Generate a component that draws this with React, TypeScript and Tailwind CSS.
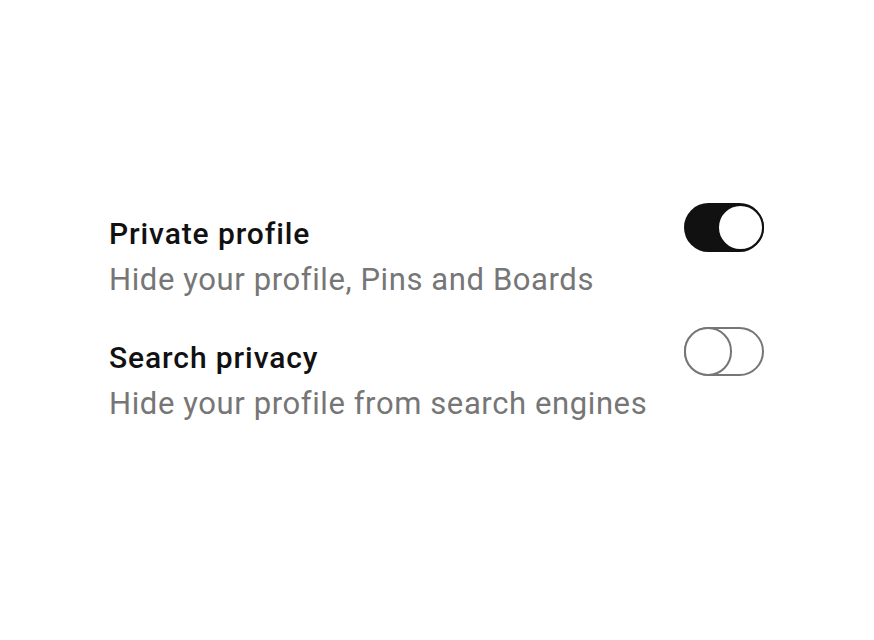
import React, { useState } from "react";

type Setting = { id: string; title: string; desc: string; on: boolean };

const initial: Setting[] = [
  { id: "private", title: "Private profile", desc: "Hide your profile, Pins and Boards", on: true },
  { id: "search", title: "Search privacy", desc: "Hide your profile from search engines", on: false },
];

function Toggle({ on, onClick }: { on: boolean; onClick: () => void }) {
  if (on) {
    return (
      <button
        onClick={onClick}
        className="w-[80px] h-[49px] rounded-full bg-[#111111] flex items-center justify-end shrink-0"
      >
        <span className="w-[47px] h-[47px] rounded-full bg-white border-2 border-[#111111]" />
      </button>
    );
  }
  return (
    <button
      onClick={onClick}
      className="w-[80px] h-[49px] rounded-full border-[2.5px] border-[#767676] bg-white flex items-center justify-start shrink-0"
    >
      <span className="w-[48px] h-[49px] -ml-[2.5px] rounded-full bg-white border-[2.5px] border-[#767676]" />
    </button>
  );
}

export default function App() {
  const [items, setItems] = useState(initial);

  const flip = (id: string) =>
    setItems((prev) => prev.map((s) => (s.id === id ? { ...s, on: !s.on } : s)));

  return (
    <div className="w-[874px] h-[640px] bg-white font-['Roboto',sans-serif] pt-[203px] pl-[109px]">
      <div className="w-[655px] flex flex-col gap-[23px]">
        {items.map((s) => (
          <div key={s.id} className="flex justify-between items-start">
            <div className="pt-[11px]">
              <h2 className="text-[30px] leading-[40px] font-medium tracking-[0.9px] text-[#111111]">{s.title}</h2>
              <p className="mt-[2px] text-[31px] leading-[48px] tracking-[0.6px] text-[#767676]">{s.desc}</p>
            </div>
            <Toggle on={s.on} onClick={() => flip(s.id)} />
          </div>
        ))}
      </div>
    </div>
  );
}
